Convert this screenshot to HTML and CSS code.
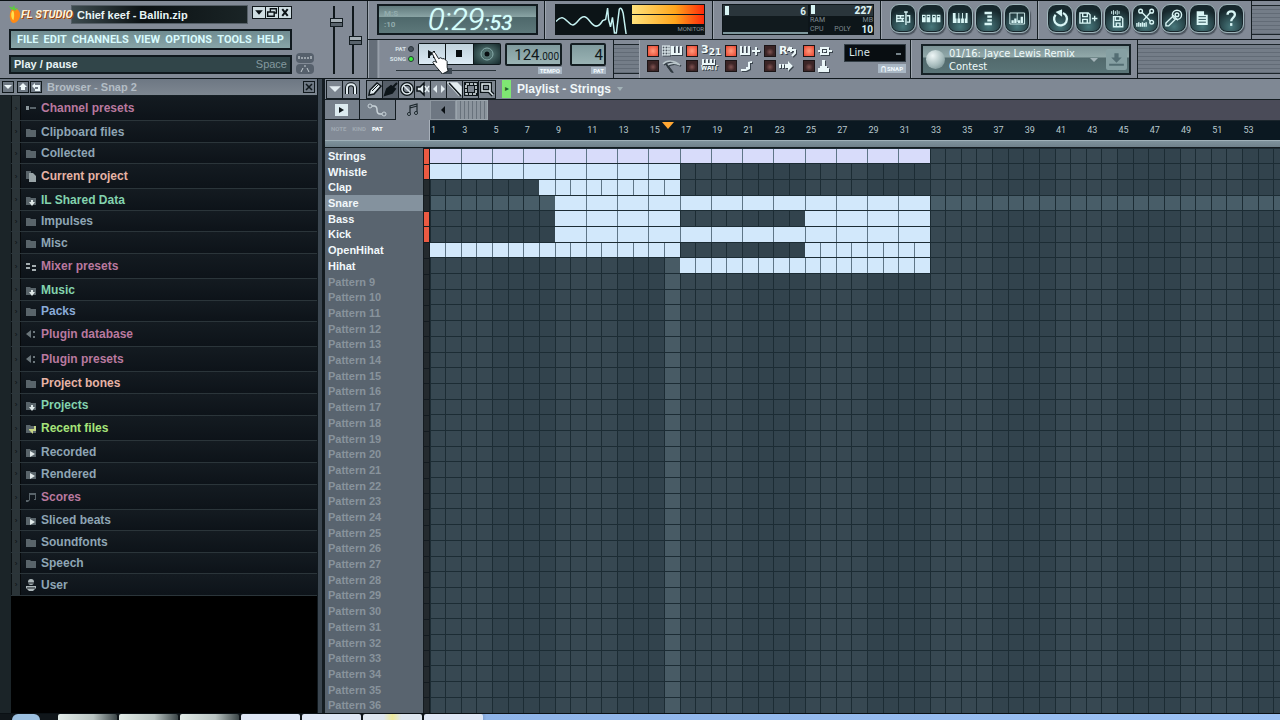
FILE: index.html
```html
<!DOCTYPE html>
<html lang="en">
<head>
<meta charset="utf-8">
<title>FL Studio - Chief keef - Ballin.zip</title>
<link rel="stylesheet" href="styles.css">
</head>
<body>
<header class="toolbar">
  <section class="main-panel">
    <div class="title-row">
      <svg class="fruit" viewBox="0 0 14 20" preserveAspectRatio="none"><path d="M3 5C5 2 13 4 13 10C13 15 9 19 5 19C0 18 0 8 3 5Z" fill="#ff8a14"/><path d="M4 6C7 6 6 15 5 16C2 14 2 8 4 6Z" fill="#ffe14d"/><path d="M2 4L0 1L4 3L6 0L7 4L11 3L7 6Z" fill="#5ad03c"/></svg>
      <strong class="brand">FL STUDIO</strong>
      <span class="project">Chief keef - Ballin.zip</span>
      <div class="win-buttons">
        <button aria-label="Minimize"><svg viewBox="0 0 11 10"><path d="M2 3H9L5.500 7Z" fill="#0b1216"/></svg></button>
        <button aria-label="Restore"><svg viewBox="0 0 11 10"><path d="M4 4V1.500H9.500V5.500H8M1.500 4.500H7.500V8.500H1.500Z" fill="none" stroke="#0b1216" stroke-width="1.300"/></svg></button>
        <button aria-label="Close"><svg viewBox="0 0 11 10"><path d="M3 2L8 8M8 2L3 8" stroke="#0b1216" stroke-width="1.800"/></svg></button>
      </div>
    </div>
    <nav class="menu">
      <button>FILE</button><button>EDIT</button><button>CHANNELS</button><button>VIEW</button><button>OPTIONS</button><button>TOOLS</button><button>HELP</button>
    </nav>
    <div class="hint"><span>Play / pause</span><span class="key">Space</span></div>
  </section>
  <div class="mini-buttons">
    <button aria-label="MIDI"><svg viewBox="0 0 18 10"><path d="M3 3V6M6 4V6M9 4V6M12 4V6M15 3V6" stroke="#dfe6ea"/></svg></button>
    <button aria-label="Knob"><svg viewBox="0 0 18 10"><path d="M5 8L7 4M13 8L11 4M8 2H10" stroke="#c4ccd2"/></svg></button>
  </div>
  <section class="faders">
    <input type="range" class="fader" min="0" max="100" value="80" aria-label="Main volume">
    <input type="range" class="fader" min="0" max="100" value="50" aria-label="Main pitch">
  </section>

  <div class="right">
    <div class="strip">
      <section class="box clock-box">
        <div class="clock"><span class="modes">M:S<br>:10</span><output class="time">0:29<small>:53</small></output></div>
      </section>
      <section class="box scope-box">
        <div class="scope">
          <svg viewBox="0 0 76 28" preserveAspectRatio="none"><path d="M0 16C5 10 8 12 12 16S18 21 23 15S31 11 35 16S43 23 48 15L51 14L53 3L54 14L56 21L58 12L60 27H62L65 4Q67 1 69 8L72 28" fill="none" stroke="#c6f2f2" stroke-width="1.500"/></svg>
          <div class="monitor"><i class="vu"></i><i class="vu"></i><span>MONITOR</span></div>
        </div>
      </section>
      <section class="box cpu-box">
        <div class="cpu">
          <div class="cpu-main"><i class="pip"></i><span>6</span></div>
          <div class="cpu-side">
            <div class="read"><i class="pip"></i><b>227</b></div>
            <div class="tiny"><span>RAM</span><span>MB</span></div>
            <div class="tiny"><span>CPU</span><span>POLY</span><b>10</b></div>
          </div>
        </div>
      </section>
      <section class="box round-box">
        <button aria-label="Playlist"><svg viewBox="0 0 20 20"><path d="M3 7H11M3 10H11M3 13H11M14 7H17V14H14M13 3V17M11 3H15M3 6V14M7 7V10M9 10V13"/></svg></button>
        <button aria-label="Step sequencer"><svg viewBox="0 0 20 20"><path class="solid" d="M0 6H4V14H0ZM5 6H9V14H5ZM11 6H15V14H11ZM16 6H20V14H16Z"/><path d="M1 8H3M6 8H8M12 8H14M17 8H19" stroke="#23454b"/></svg></button>
        <button aria-label="Piano roll"><svg viewBox="0 0 20 20"><path class="solid" d="M2 4H5V10H6V15H2ZM8 4H9V10H10V15H7V10H8ZM12 4H13V10H14V15H11V10H12ZM16 4H18V15H15V10H16Z"/></svg></button>
        <button aria-label="Browser"><svg viewBox="0 0 20 20"><path d="M6 4H14M9 8H14M9 12H14M6 16H14" stroke-width="2"/></svg></button>
        <button aria-label="Mixer"><svg viewBox="0 0 20 20"><path d="M2 4H18V16H2ZM10 4V14" stroke-width="1"/><path d="M5 15V12M8 15V10M12 15V12M15 15V8" stroke-width="2"/></svg></button>
      </section>
      <section class="box round-box wide">
        <button aria-label="Undo"><svg viewBox="0 0 20 20"><path d="M5 6A7 7 0 1 0 13 4" stroke-width="2"/><path class="solid" d="M5 3L12 0V8Z"/></svg></button>
        <button aria-label="Save new version"><svg viewBox="0 0 20 20"><path d="M1 4H10L12 6V15H1ZM4 4V8H9V4M4 15V11H9V15M14 10H20M17 7V13"/></svg></button>
        <button aria-label="Render"><svg viewBox="0 0 20 20"><path d="M4 5V2M6 6V1M8 5V2M10 6V1M12 5V2" stroke-width="1"/><path d="M6 8H14L16 10V19H6ZM8 8V12H13V8M9 19V15H13V19"/></svg></button>
        <button aria-label="Edit wave"><svg viewBox="0 0 20 20"><path d="M6 3L16 13M16 3L8 12M1 19V15M3 19V14M5 19V15M7 19V14M9 19V15M11 19V14"/><circle cx="5" cy="2" r="2"/><circle cx="17" cy="2" r="2"/><circle cx="17" cy="14" r="2"/></svg></button>
        <button aria-label="Record audio"><svg viewBox="0 0 20 20"><circle cx="13" cy="6" r="5"/><circle cx="13" cy="6" r="2"/><path d="M8 6L14 12M8 8L1 15V18H4L11 11"/></svg></button>
        <button aria-label="Project info"><svg viewBox="0 0 20 20"><path class="solid" d="M4 2H12V6H16V17H4Z"/><path d="M6 8H14M6 11H14M6 14H14" stroke="#23454b" stroke-width="1"/></svg></button>
        <button aria-label="Help"><svg viewBox="0 0 20 20"><path d="M6 6C6 1 14 1 14 6C14 9 10 9 10 13" stroke-width="2"/><path d="M10 15V18" stroke-width="2"/></svg></button>
      </section>
      <i class="ridges"></i>
    </div>

    <div class="strip lower">
      <section class="box transport-box">
        <div class="mode-switch"><label>PAT<input type="radio" name="mode"></label><label>SONG<input type="radio" name="mode" checked></label></div>
        <div class="transport">
          <div class="transport-row">
            <button aria-label="Play"><svg viewBox="0 0 26 18"><path d="M9 5V13H11V11L14 9V13H16V6H14V8Z" fill="#10181c"/></svg></button>
            <button aria-label="Stop"><svg viewBox="0 0 26 18"><path d="M10 5H16V12H10Z" fill="#080d10"/></svg></button>
            <button class="rec" aria-label="Record"><svg viewBox="0 0 26 18"><circle cx="13" cy="9" r="6" fill="none" stroke="#86aaa9"/><circle cx="13" cy="9" r="2.500" fill="#080d10"/></svg></button>
          </div>
          <input type="range" class="position" min="0" max="100" value="50" aria-label="Song position">
        </div>
        <div class="lcd-group"><output class="lcd tempo">124<small>.000</small></output><span class="tag">TEMPO</span></div>
        <div class="lcd-group"><output class="lcd pat">4</output><span class="tag">PAT</span></div>
      </section>
      <i class="ridges gap"></i>
      <section class="box switches-box">
        <div class="switches">
          <label><input type="checkbox" checked aria-label="Typing keyboard"><svg viewBox="0 0 20 12"><path d="M0 1H8V10H0ZM0 4H8M0 7H8M3 1V10M6 1V10" stroke-width="1"/><path class="fill" d="M9 1H12V8H14V1H16V8H18V1H20V10H9Z"/></svg></label>
          <label><input type="checkbox" checked aria-label="Countdown"><span class="count">3<sub>21</sub></span></label>
          <label><input type="checkbox" checked aria-label="Blend recording"><svg viewBox="0 0 20 12"><path class="fill" d="M0 1H2V8H4V1H6V8H8V1H10V10H0ZM15 2H17V5H20V7H17V10H15V7H12V5H15Z"/></svg></label>
          <label><input type="checkbox" aria-label="Loop recording"><span class="loop">R</span><svg class="small" viewBox="0 0 10 12"><path d="M3 2L1 5H8V8L5 11M4 2V7" stroke-width="2"/></svg></label>
          <label><input type="checkbox" checked aria-label="Multilink"><svg viewBox="0 0 20 12"><path d="M0 6H3M10 6H14M3 3H10V9H3ZM5 6H8" stroke-width="2"/></svg></label>
          <label><input type="checkbox" aria-label="Metronome"><svg viewBox="0 0 20 12"><path d="M1 4C5 0 12 0 18 5C12 2 8 3 4 6" stroke="#b9c5ca" stroke-width="1.500"/><path d="M4 4L10 12" stroke="#303a40" stroke-width="2"/></svg></label>
          <label><input type="checkbox" aria-label="Wait for input"><span class="wait"><svg viewBox="0 0 20 6"><path class="fill" d="M1 0H3V4H5V0H7V4H9V0H11V4H13V0H14V6H1Z"/></svg>WAIT</span></label>
          <label><input type="checkbox" aria-label="Step edit"><svg viewBox="0 0 20 12"><path class="fill" d="M1 9H6V7H8V2L12 1V3H10V9L6 11H1Z"/></svg></label>
          <label><input type="checkbox" aria-label="Auto scroll"><svg viewBox="0 0 20 12"><path class="fill" d="M0 4H2V8H0ZM3 4H5V8H3ZM6 4H9V1L14 6L9 11V8H6Z"/></svg></label>
          <label><input type="checkbox" aria-label="Controller"><svg viewBox="0 0 20 12"><path class="fill" d="M4 0H7V6H9V8H11V12H0V8H2V6H4Z"/></svg></label>
        </div>
        <div class="snap"><select aria-label="Snap"><option>Line</option></select><span class="tag">⋂ SNAP</span></div>
      </section>
      <section class="box news-box">
        <div class="news"><i class="globe"></i><p>01/16: Jayce Lewis Remix Contest</p><i class="caret"></i><button aria-label="Download"><svg viewBox="0 0 20 20"><path d="M8 4H12V8H15L10 13L5 8H8ZM3 14H17V16H3Z" fill="#536d73"/></svg></button></div>
      </section>
      <i class="ridges"></i>
    </div>
  </div>
</header>

<main class="workspace">
  <aside class="browser">
    <header class="browser-head">
      <button aria-label="Browser menu"><svg viewBox="0 0 10 10"><path d="M1 3H9L5 7Z"/></svg></button>
      <div class="pair">
        <button aria-label="Up"><svg viewBox="0 0 10 10"><path d="M5 1L9 5H7V8H3V5H1Z"/></svg></button>
        <button aria-label="Back"><svg viewBox="0 0 10 10"><path d="M1 4L4 1V3H9V9H4V7H7V5H4V7Z"/></svg></button>
      </div>
      <h2>Browser - Snap 2</h2>
      <button aria-label="Close browser"><svg viewBox="0 0 10 10"><path d="M2 2L8 8M8 2L2 8" stroke="#10181c" stroke-width="1.500"/></svg></button>
    </header>
    <ul class="tree" id="tree"></ul>
  </aside>

  <section class="playlist">
    <header class="playlist-head">
      <div class="tools">
        <button aria-label="Menu"><svg viewBox="0 0 16 16"><path class="f" d="M4 6H12L8 10Z"/></svg></button>
        <button aria-label="Snap"><svg viewBox="0 0 16 16"><path d="M4 13V7C4 2 12 2 12 7V13" stroke="#0d1519" stroke-width="4"/><path d="M4 13V7C4 2 12 2 12 7V13" stroke-width="2"/></svg></button>
      </div>
      <div class="tools">
        <button aria-label="Draw"><svg viewBox="0 0 16 16"><path class="f" d="M2 14L3 9L10 2L14 5L7 13Z" stroke="#0d1519"/><path d="M5 10L11 4" stroke="#0d1519" stroke-width="1"/></svg></button>
        <button class="on" aria-label="Paint"><svg viewBox="0 0 16 16"><path d="M2 14L4 8L8 5L12 8L9 12ZM9 7L14 2" fill="#0d1519" stroke="#0d1519" stroke-width="2"/></svg></button>
        <button aria-label="Delete"><svg viewBox="0 0 16 16"><circle class="edge" cx="8" cy="8" r="5"/><circle cx="8" cy="8" r="5"/><path d="M5 5L11 11"/></svg></button>
        <button aria-label="Mute"><svg viewBox="0 0 16 16"><path class="f" d="M2 6H5L9 2V14L5 10H2Z" stroke="#0d1519"/><path d="M10 5L14 11M14 5L10 11"/></svg></button>
        <button aria-label="Slip"><svg viewBox="0 0 16 16"><path class="f" d="M6 4V12L2 8ZM10 4V12L14 8Z" stroke="none"/></svg></button>
        <button aria-label="Slice"><svg viewBox="0 0 16 16"><path class="f" d="M1 2H10L14 6V14H12Z"/><path d="M2 2L14 15" stroke="#0d1519"/></svg></button>
        <button aria-label="Select"><svg viewBox="0 0 16 16"><path class="edge" d="M3 3H13V13H3Z"/><path d="M3 3H13V13H3Z" stroke-dasharray="3 1"/></svg></button>
        <button aria-label="Zoom"><svg viewBox="0 0 16 16"><path class="edge" d="M3 3H11V10H3ZM10 10L14 14"/><path d="M3 3H11V10H3ZM10 10L14 14"/></svg></button>
      </div>
      <span class="go">▸</span>
      <h2>Playlist - Strings</h2><i class="caret"></i>
    </header>
    <div class="tabs-row">
      <div class="tabs">
        <button aria-label="Clips"><svg viewBox="0 0 20 16"><path d="M3 2H16V14H3Z" fill="#dcebf0"/><path d="M7 5L12 8L7 11Z" fill="#10181c"/></svg></button>
        <button aria-label="Automation"><svg viewBox="0 0 20 16"><path d="M3 4H7C13 4 7 12 13 12H16" fill="none" stroke="#c8d2d8" stroke-width="1.500"/><circle cx="3" cy="4" r="2" fill="#77818c" stroke="#c8d2d8"/><circle cx="17" cy="12" r="2" fill="#77818c" stroke="#c8d2d8"/></svg></button>
        <button class="active" aria-label="Patterns"><svg viewBox="0 0 20 16"><path d="M7 11V4L14 2V10M7 6L14 4" fill="none" stroke="#1c262c" stroke-width="1.200"/><circle cx="6" cy="12" r="1.500" fill="#9aa5ad" stroke="#1c262c"/><circle cx="13" cy="11" r="1.500" fill="#9aa5ad" stroke="#1c262c"/></svg></button>
      </div>
      <button class="scroll-left" aria-label="Scroll left"><svg viewBox="0 0 10 10"><path d="M7 1V9L3 5Z" fill="#0a1014"/></svg></button>
      <i class="thumb"></i>
    </div>
    <div class="ruler-row">
      <div class="kinds"><span>NOTE</span><span>KIND</span><b>PAT</b></div>
      <div class="ruler" id="ruler"><i class="marker"></i></div>
    </div>
    <div class="lip"></div>
    <div class="lanes">
      <ol class="names" id="names"></ol>
      <svg class="grid" id="grid" viewBox="0 0 544 360" preserveAspectRatio="none" role="img" aria-label="Pattern clips"></svg>
    </div>
  </section>
</main>

<footer class="taskbar"><i class="orb"></i><i class="task"></i><i class="task"></i><i class="task"></i><i class="task light"></i><i class="task light"></i><i class="task light sun"></i><i class="task light"></i></footer>

<svg class="pointer" viewBox="0 0 20 24"><path d="M1 2C2 0 4 1 5 3L8 8L10 7L12 8L14 8L17 11L17 17L18 21L12 24L5 16L2 12C2 10 5 11 6 12Z" fill="#fff" stroke="#10181c"/></svg>
<script src="app.js"></script>
</body>
</html>
```
FILE: styles.css
```css
* { box-sizing: border-box; }
body {
  margin: 0;
  height: 100vh;
  display: flex;
  flex-direction: column;
  overflow: hidden;
  background: #10181d;
  font-family: "Liberation Sans", Arial, sans-serif;
  font-size: 12px;
  color: #e8f4f6;
}
button { border: 0; padding: 0; margin: 0; background: none; font: inherit; color: inherit; }
h2, p, ul, ol { margin: 0; padding: 0; }
ul, ol { list-style: none; }
i { display: block; font-style: normal; }
svg { display: block; }

.toolbar {
  display: flex;
  flex: none;
  height: 79px;
  border-top: 1px solid #0a1014;
  border-bottom: 1px solid #10181d;
  background: #828a96;
}
.main-panel { width: 294px; padding: 4px 0 4px 9px; display: flex; flex-direction: column; gap: 5px; }
.title-row { display: flex; height: 19px; align-items: stretch; }
.fruit { width: 12px; height: 19px; }
.brand {
  width: 50px;
  font: italic bold 11px/19px Roboto, sans-serif;
  white-space: nowrap;
  color: #fff2dc;
  text-shadow: 1px 1px 0 #8a3c10, 0 1px 0 #e89a3c;
  position: relative;
}
.project {
  flex: 1;
  padding-left: 5px;
  font-weight: bold;
  font-size: 11px;
  line-height: 18px;
  background: linear-gradient(90deg, #3c4a4e, #0c1214 40%, #1a2426);
  border: 1px solid #566068;
  white-space: nowrap;
}
.win-buttons { display: flex; gap: 1px; margin: 1px 2px 5px 4px; padding: 1px; background: #10181c; }
.win-buttons button { width: 12px; background: #cfdde2; }
.win-buttons svg { width: 12px; height: 11px; }
.menu {
  display: flex;
  align-items: center;
  justify-content: space-between;
  height: 21px;
  padding: 0 6px;
  margin-right: 2px;
  border: 2px solid #10191e;
  background: linear-gradient(#6f8b90, #88a5a8);
  font: bold 11px/17px Roboto, sans-serif;
  color: #d8fbfd;
}
.hint {
  display: flex;
  justify-content: space-between;
  height: 20px;
  padding: 0 3px;
  margin-right: 2px;
  border: 2px solid #10191e;
  background: #314549;
  font: bold 11px/14px "Liberation Sans", sans-serif;
}
.hint .key { color: #84999f; font-weight: normal; }
.mini-buttons { width: 27px; padding: 52px 5px 0 2px; }
.mini-buttons button { display: block; width: 18px; height: 10px; margin-bottom: 1px; background: #56606c; border-radius: 4px; }
.faders { display: flex; width: 47px; padding: 5px 4px 3px; border-right: 1px solid #1c252b; }
.fader { appearance: none; writing-mode: vertical-lr; direction: rtl; width: 19px; min-width: 0; height: 68px; margin: 0; background: linear-gradient(90deg, transparent 8px, #10181c 8px, #10181c 10px, transparent 10px); }
.fader::-webkit-slider-thumb { appearance: none; width: 13px; height: 9px; margin-left: 3px; background: linear-gradient(#a6b0b6 3px, #10181c 3px, #10181c 4px, #59636c 4px); border: 1px solid #141d22; }

.right { flex: 1; display: flex; flex-direction: column; min-width: 0; }
.strip { display: flex; flex: 1; min-height: 0; border-bottom: 1px solid #10181d; }
.lower { border-bottom: 0; }
.box { flex: none; border-right: 1px solid #141d22; border-left: 1px solid #9ea6b0; background: #828a96; }
.ridges { flex: 1; margin: 4px 0; background: repeating-linear-gradient(#747d88 0 3px, #626b76 3px 4px); border: solid #1b2429; border-width: 1px 0; }
.ridges.gap { flex: none; width: 25px; }

.clock-box { width: 177px; padding: 3px 6px 4px 8px; }
.clock { display: flex; height: 31px; padding: 0 5px; border: 2px solid #111a1f; background: linear-gradient(#60797c, #89a3a4 40%, #4e686b 42%, #5d787a); }
.modes { width: 44px; font: bold 8px/11px Roboto, sans-serif; color: #93adae; padding-top: 2px; }
.time { font: italic 300 31px/28px Roboto, sans-serif; color: #d4fffd; text-shadow: 0 0 1px #d4fffd; }
.time small { font-size: 21px; font-weight: 400; }
.scope-box { width: 168px; padding: 3px 7px 3px 9px; }
.scope { display: flex; gap: 2px; height: 31px; padding: 1px; background: #0c1417; }
.scope svg { width: 74px; height: 29px; }
.monitor { flex: 1; display: flex; flex-direction: column; gap: 1px; font: 6px/8px Roboto, sans-serif; color: #8b979b; text-align: right; }
.vu { height: 9px; background: linear-gradient(90deg, #ffe27b, #ffa51c 60%, #ff2a0a); }
.cpu-box { width: 168px; padding: 3px 6px 3px 8px; }
.cpu { display: flex; gap: 2px; height: 31px; padding: 1px; background: #0d1519; color: #d8eef0; font: bold 10px/11px Roboto, sans-serif; }
.cpu-main { width: 85px; display: flex; justify-content: space-between; border-bottom: 2px solid #7e979c; padding: 1px 2px; background: linear-gradient(#2a353b 11px, #111a1e 11px); }
.pip { width: 4px; height: 9px; background: #d8f4f4; }
.cpu-side { flex: 1; display: flex; flex-direction: column; }
.read { display: flex; justify-content: space-between; height: 11px; background: #2a353b; padding: 0 1px; }
.tiny { display: flex; justify-content: space-between; gap: 4px; height: 9px; font-size: 7px; line-height: 9px; font-weight: 400; color: #7d8a90; }
.tiny b { font-size: 10px; color: #d8eef0; }

.round-box { display: flex; gap: 2px; width: 157px; padding: 3px 7px 0 8px; }
.round-box.wide { width: 214px; }
.round-box button {
  flex: 1;
  height: 29px;
  padding: 3px;
  border-radius: 9px;
  border: 1px solid #9fb6bb;
  background: radial-gradient(circle at 50% 80%, #47777b, #16272c 70%);
  box-shadow: inset 0 0 0 1px #18262c, 1px 2px 1px #4b545e;
}
.round-box svg { width: 100%; height: 21px; fill: none; stroke: #d8f5f5; stroke-width: 1.5px; }
.round-box .solid { fill: #d8f5f5; stroke: none; }
.round-box svg [stroke-width="2"] { stroke-width: 2.5px; }
.round-box svg [stroke-width="1"] { stroke-width: 1px; }

.transport-box { display: flex; width: 246px; padding: 3px 0 0 22px; background: linear-gradient(90deg, #656e79 8px, #9ea6b0 9px, #828a96 11px); }
.mode-switch { width: 23px; padding-top: 1px; }
.mode-switch label { display: flex; justify-content: flex-end; align-items: center; gap: 2px; height: 10px; font: bold 6px/10px Roboto, sans-serif; color: #d8e2e6; }
.mode-switch input { appearance: none; flex: none; width: 6px; height: 6px; margin: 0; border-radius: 3px; background: #47515c; border: 1px solid #2a343a; }
.mode-switch input:checked { background: #3bf03b; }
.transport { width: 83px; margin-left: 4px; }
.transport-row { display: flex; gap: 1px; padding: 1px; height: 22px; background: #0e171b; border-radius: 2px; }
.transport-row button { flex: 1; background: linear-gradient(#c0d2dc, #dceaf4); }
.transport-row .rec { background: radial-gradient(#628784, #15282b); }
.transport-row svg { width: 26px; height: 20px; }
.position { appearance: none; display: block; width: 100px; height: 10px; margin: 1px 0 0 -22px; background: linear-gradient(transparent 4px, #2a343b 4px, #2a343b 5px, transparent 5px); }
.position::-webkit-slider-thumb { appearance: none; width: 11px; height: 6px; background: #3d4852; }
.lcd-group { display: flex; flex-direction: column; align-items: flex-end; margin-left: 4px; }
.lcd { display: block; height: 23px; border: 2px solid #141e22; background: linear-gradient(#809b9e, #9ab3b4); color: #10191c; font: 15px/21px Roboto, sans-serif; text-align: right; padding-right: 1px; border-radius: 2px; }
.tempo { width: 57px; }
.tempo small { font-size: 10px; }
.pat { width: 36px; margin-left: 4px; }
.tag { padding: 0 2px; margin-top: 1px; background: #a9b7c4; color: #f4fbff; font: bold 6px/7px Roboto, sans-serif; }

.switches-box { display: flex; width: 272px; padding: 4px 4px 0 7px; }
.switches { display: grid; grid-template-columns: repeat(5, 39px); grid-template-rows: 13px 13px; gap: 2px 0; }
.switches label { display: flex; align-items: center; gap: 3px; }
.switches input { appearance: none; flex: none; width: 12px; height: 12px; margin: 0; border: 1px solid #1b1517; background: radial-gradient(circle at 50% 60%, #805351, #3c2526 50%); }
.switches input:checked { background: radial-gradient(#ff9a7c, #e8432e); }
.switches svg { width: 20px; height: 12px; fill: none; stroke: #eaf6f8; filter: drop-shadow(1px 1px 0 #39434c); }
.switches .fill { fill: #eaf6f8; stroke: none; }
.switches .small { width: 10px; }
.switches span { font: bold 11px/12px "DejaVu Sans", sans-serif; color: #f0fafa; text-shadow: 1px 1px 0 #39434c; }
.count sub { font-size: 9px; line-height: 9px; vertical-align: -2px; }
.switches .loop { font-size: 11px; margin-right: -3px; }
.switches .wait { font: bold 7px/7px Roboto, sans-serif; }
.wait svg { height: 6px; }
.snap { display: flex; flex-direction: column; align-items: flex-end; flex: 1; min-width: 0; }
.snap select { appearance: none; width: 62px; height: 18px; padding: 0 4px; border: 1px solid #343f47; border-radius: 0; background: linear-gradient(#76838a, #76838a) no-repeat 51px 8px / 5px 2px, #080d11; color: #dce8ea; font: 10px/14px "DejaVu Sans", sans-serif; }
.snap .tag { margin-top: 2px; padding: 1px 3px; }
.news-box { width: 227px; padding: 4px 6px 0 9px; }
.news { display: flex; align-items: center; height: 31px; padding: 0 2px 0 3px; border: 2px solid #172227; background: linear-gradient(#7c9396, #91a8a9 40%, #526a6d 45%, #5a7477); }
.globe { width: 19px; height: 19px; border-radius: 50%; background: radial-gradient(circle at 35% 30%, #eef6f6, #a7bcbd 55%, #647d80); }
.news p { flex: 1; margin-left: 4px; font: 11px/13px "DejaVu Sans Condensed", "DejaVu Sans", sans-serif; color: #effafa; }
.news button { width: 21px; height: 21px; background: #86a0a3; margin-left: 8px; border-radius: 2px; }
.caret { width: 0; height: 0; border: solid transparent; border-width: 4px 4px 0; border-top-color: #a3b3b8; }

.workspace { flex: 1; display: flex; min-height: 0; background: #3b4650; }
.browser { width: 318px; flex: none; display: flex; flex-direction: column; background: #000; border-right: 1px solid #10181d; }
.browser-head { display: flex; align-items: center; gap: 3px; height: 17px; padding: 0 2px; background: linear-gradient(#6d7783, #7e8791); border-bottom: 1px solid #161f24; }
.pair { display: flex; gap: 1px; }
.browser-head button { width: 12px; height: 12px; border: 1px solid #10181c; background: #6f7984; }
.browser-head svg { width: 10px; height: 10px; fill: #eef8fa; }
.browser-head h2 { flex: 1; padding-left: 2px; font: bold 11px/15px "Liberation Sans", sans-serif; color: #b3bdc5; }
.tree { flex: 1; display: flex; flex-direction: column; border-left: 11px solid #1b2428; }
.tree li { display: flex; align-items: center; height: 22px; flex: none; border-bottom: 1px solid #2b353a; background: linear-gradient(#141b21, #0d1319); }
.tree li.tall { height: 25px; }
.tree li.low { height: 21px; }
.tree .arrow { width: 10px; align-self: stretch; display: flex; align-items: center; justify-content: center; background: #2b3438; border-left: 1px solid #0a0f12; border-right: 1px solid #06090b; color: #0a0f12; font-size: 8px; }
.tree svg { width: 12px; height: 12px; margin: 0 4px; fill: #59646a; stroke: none; }
.tree span { font-weight: bold; font-size: 12px; line-height: 16px; }
.tree .pink { color: #b9799f; }
.tree .blue { color: #8ea5b4; }
.tree .sky { color: #8aabd8; }
.tree .peach { color: #e6b3a5; }
.tree .mint { color: #83d3ae; }
.tree .lime { color: #a6e47a; }

.playlist { flex: 1; min-width: 0; display: flex; flex-direction: column; margin-left: 4px; border-left: 3px solid #141c21; background: #828a96; }
.playlist-head { display: flex; align-items: center; height: 21px; flex: none; gap: 6px; padding-left: 1px; background: #7f8894; border-bottom: 1px solid #141c21; }
.tools { display: flex; border: 1px solid #141c21; }
.tools button { width: 16px; height: 17px; background: #7d8690; border-right: 1px solid #141c21; }
.tools button:last-child { border-right: 0; }
.tools .on { background: #555e68; }
.tools svg { width: 16px; height: 16px; fill: none; stroke: #e3edf1; stroke-width: 1.5; }
.tools .edge { stroke: #0d1519; stroke-width: 4px; }
.tools .f { fill: #e3edf1; }
.go { width: 9px; height: 18px; background: #7fe873; color: #23612a; font-size: 8px; line-height: 18px; text-align: center; }
.playlist h2 { font: bold 12px/16px "Liberation Sans", sans-serif; color: #f0f7f9; }
.playlist-head .caret { border-width: 4px 3px 0; }
.tabs-row { display: flex; height: 20px; flex: none; background: #4a4b58; }
.tabs { display: flex; width: 105px; }
.tabs button { flex: 1; display: grid; place-items: center; background: #77818c; border-right: 1px solid #141c21; border-bottom: 1px solid #141c21; }
.tabs .active { background: #858d98; border: 0; }
.tabs svg { width: 20px; height: 16px; }
.scroll-left { width: 26px; display: grid; place-items: center; background: #6e7782; border: 1px solid #8e97a0; }
.scroll-left svg { width: 10px; height: 10px; }
.thumb { width: 32px; border: 1px solid #9aa4ac; background: repeating-linear-gradient(90deg, #8b949d 0 3px, #68727c 3px 4px); }
.ruler-row { display: flex; height: 20px; flex: none; }
.kinds { width: 105px; padding: 0 6px; display: flex; gap: 6px; font: bold 6px/18px Roboto, sans-serif; color: #a0a9b2; border-right: 1px solid #a8b0ba; }
.kinds b { color: #f4fafa; }
.ruler { flex: 1; position: relative; display: grid; grid-template-columns: repeat(27, minmax(0, 5fr)) minmax(0, 1fr); background: #0b1821; border-top: 1px solid #1b252c; overflow: hidden; }
.ruler span { padding-left: 1px; font: 9px/19px Roboto, sans-serif; color: #b9c9ce; white-space: nowrap; overflow: hidden; }
.marker { position: absolute; left: 28%; top: 1px; width: 0; height: 0; margin-left: -6px; border: solid transparent; border-width: 7px 6px 0; border-top-color: #ffa733; }
.lip { height: 8px; flex: none; background: linear-gradient(#7e929c, #6f818b); border-bottom: 1px solid #141c21; border-top: 1px solid #9fb0b8; }
.lanes { flex: 1; display: flex; min-height: 0; }
.names { width: 105px; display: grid; grid-template-rows: repeat(36, minmax(0, 1fr)); background: #59646f; }
.names li { display: flex; min-height: 0; padding-left: 3px; font: bold 11px/16px "Liberation Sans", sans-serif; color: #f2f8fb; }
.names li.empty { color: #88939c; }
.names li.selected { background: #84929e; }
.names li::after { content: ""; width: 5px; margin-left: auto; border: solid #141b20; border-width: 1px 1px 0 1px; background: #242a2e; }
.names li.used::after { background: #ec5a42; }
.grid { flex: 1; min-width: 0; height: 100%; background: #374852; shape-rendering: crispEdges; }
.grid .band { fill: #32434d; }
.grid .row-on { fill: #485d68; }
.grid .head { fill: #566c76; fill-opacity: .6; }
.grid .clip { fill: #d2e8fb; }
.grid .clip.lilac { fill: #d8dcfa; }
.grid line { stroke: #1c2c34; stroke-width: 1px; vector-effect: non-scaling-stroke; }
.grid .seam { stroke: #5f7687; }

.taskbar { display: flex; gap: 2px; height: 7px; flex: none; padding-left: 12px; background: linear-gradient(90deg, #10161a 35%, #8fb4e8 38%, #9dc2f4); border-top: 1px solid #0a1014; }
.orb { width: 28px; margin-right: 16px; border-radius: 14px 14px 0 0; background: #9cc0e0; }
.task { width: 59px; background: linear-gradient(90deg, #e3ece8, #b9c4c2 60%, #3c4648); border-radius: 2px 2px 0 0; }
.task.light { background: #dfe7f5; }
.task.sun { background: linear-gradient(90deg, #dfe7f0 35%, #eeea9a 50%, #dfe7f0 65%); }
.pointer { position: absolute; left: 431px; top: 51px; width: 19px; height: 23px; }
```
FILE: app.js
```js
const folder = 'M1 3H5L6 4H11V11H1Z';
const icons = {
  folder: `<path d="${folder}"/>`,
  channel: '<path d="M1 4H4V8H1Z" fill="#8b969b"/><path d="M5 5H11V7H5Z"/>',
  page: '<path d="M1 1H6V9H1Z"/><path d="M4 3H8L11 6V12H4Z" fill="#98a3a6"/>',
  plus: `<path d="${folder}"/><path d="M6 6H8V8H10L7 12L4 8H6Z" fill="#dfe8e8"/>`,
  mixer: '<path d="M1 3H5V5H1ZM1 7H5V9H1ZM7 5H11V7H7ZM7 9H11V11H7Z" fill="#a4adb0"/>',
  plugin: '<path d="M1 6L6 2V10ZM8 3H10V5H8ZM8 8H10V10H8Z" fill="#6b767b"/>',
  recent: `<path d="${folder}"/><path d="M4 7H9V4H11V9H8V12L4 8Z" fill="#c5d486"/>`,
  play: `<path d="${folder}"/><path d="M5 5L10 8L5 11Z" fill="#e2eaea"/>`,
  notes: '<path d="M4 2H11V4H5V9L3 11H1V9H4ZM10 4H11V9H9V8H10Z"/>',
  user: '<circle cx="6" cy="3" r="3" fill="#aeb8bb"/><path d="M1 7H11V9L8 12H4L1 9Z" fill="#aeb8bb"/><path d="M3 4H9M2 9H10" stroke="#10171c"/>'
};

const entries = [
  ['Channel presets', 'channel', 'pink', 'tall'], ['Clipboard files', 'folder', 'blue', ''],
  ['Collected', 'folder', 'blue', 'low'], ['Current project', 'page', 'peach', 'tall'],
  ['IL Shared Data', 'plus', 'mint', ''], ['Impulses', 'folder', 'blue', 'low'],
  ['Misc', 'folder', 'blue', ''], ['Mixer presets', 'mixer', 'pink', 'tall'],
  ['Music', 'plus', 'mint', ''], ['Packs', 'folder', 'sky', 'low'],
  ['Plugin database', 'plugin', 'pink', 'tall'], ['Plugin presets', 'plugin', 'pink', 'tall'],
  ['Project bones', 'folder', 'peach', ''], ['Projects', 'plus', 'mint', ''],
  ['Recent files', 'recent', 'lime', 'tall'], ['Recorded', 'play', 'blue', ''],
  ['Rendered', 'play', 'blue', ''], ['Scores', 'notes', 'pink', 'tall'],
  ['Sliced beats', 'play', 'blue', 'low'], ['Soundfonts', 'folder', 'blue', ''],
  ['Speech', 'folder', 'blue', 'low'], ['User', 'user', 'blue', '']
];
document.getElementById('tree').innerHTML = entries.map(([name, icon, tone, size]) =>
  `<li class="${size}"><i class="arrow">›</i><svg viewBox="0 0 12 12">${icons[icon]}</svg><span class="${tone}">${name}</span></li>`
).join('');

const ruler = document.getElementById('ruler');
for (let bar = 1; bar <= 53; bar += 2) {
  ruler.insertAdjacentHTML('beforeend', `<span>${bar}</span>`);
}

const patterns = ['Strings', 'Whistle', 'Clap', 'Snare', 'Bass', 'Kick', 'OpenHihat', 'Hihat'];
const used = [0, 1, 4, 5];
let names = '';
for (let i = 0; i < 36; i++) {
  const cls = [i > 7 ? 'empty' : '', i === 3 ? 'selected' : '', used.includes(i) ? 'used' : ''].join(' ').trim();
  names += `<li class="${cls}">${patterns[i] || 'Pattern ' + (i + 1)}</li>`;
}
document.getElementById('names').innerHTML = names;

// Clips: row, first bar, end bar, length of one clip in bars.
const clips = [
  [0, 0, 32, 2], [1, 0, 16, 2], [2, 7, 16, 1], [3, 8, 32, 2], [4, 8, 16, 2], [4, 24, 32, 2],
  [5, 8, 32, 2], [6, 0, 16, 1], [6, 24, 32, 1], [7, 16, 32, 1]
];
const rect = (cls, x, y, w, h) => `<rect class="${cls}" x="${x}" y="${y}" width="${w}" height="${h}"/>`;
const line = (cls, x1, y1, x2, y2) => `<line class="${cls}" x1="${x1}" y1="${y1}" x2="${x2}" y2="${y2}"/>`;
let art = '';
for (let x = 4; x < 55; x += 8) art += rect('band', x * 10, 0, 40, 360);
art += rect('row-on', 0, 30, 544, 10);
art += rect('head', 150, 70, 10, 290);
for (let x = 0; x < 55; x++) art += line('', x * 10, 0, x * 10, 360);
for (const [row, from, to, step] of clips) {
  art += rect(row === 0 ? 'clip lilac' : 'clip', from * 10, row * 10, (to - from) * 10, 10);
  for (let x = from + step; x < to; x += step) art += line('seam', x * 10, row * 10, x * 10, row * 10 + 10);
}
for (let y = 0; y <= 36; y++) art += line('', 0, y * 10, 544, y * 10);
document.getElementById('grid').innerHTML = art;
```
